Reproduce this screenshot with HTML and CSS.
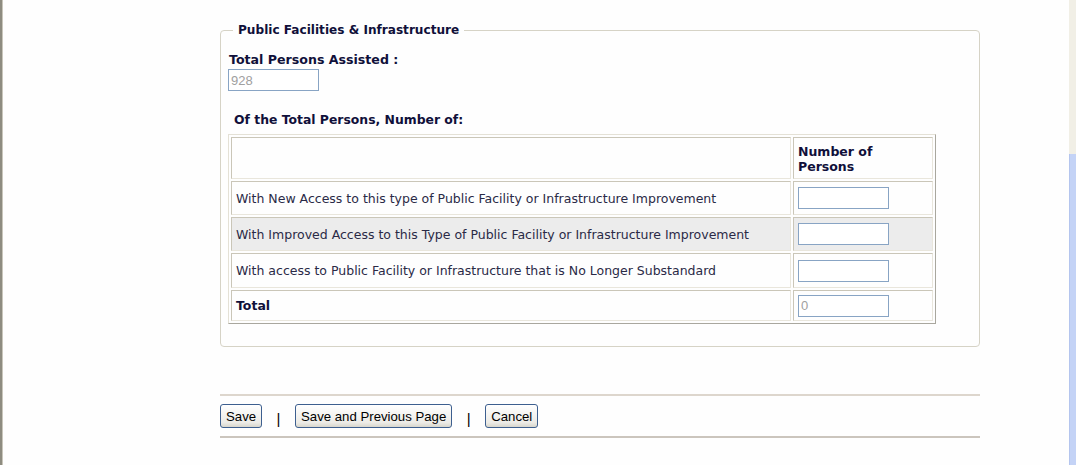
FILE: index.html
```html
<!DOCTYPE html>
<html>
<head>
<meta charset="utf-8">
<title>Public Facilities &amp; Infrastructure</title>
<link rel="stylesheet" href="styles.css">
</head>
<body>
<div class="frame">
  <div class="edge"></div>
  <main class="main">
    <div class="content">
      <fieldset class="group">
        <legend class="group-title">Public Facilities &amp; Infrastructure</legend>
        <div class="field">
          <label class="field-label">Total Persons Assisted :</label>
          <input class="text-input" type="text" value="928" disabled>
        </div>
        <h3 class="sub-heading">Of the Total Persons, Number of:</h3>
        <table class="grid">
          <tr class="head-row">
            <td class="desc"></td>
            <td class="num head">Number of Persons</td>
          </tr>
          <tr class="row-a">
            <td class="desc">With New Access to this type of Public Facility or Infrastructure Improvement</td>
            <td class="num"><input class="text-input" type="text"></td>
          </tr>
          <tr class="row-a alt">
            <td class="desc">With Improved Access to this Type of Public Facility or Infrastructure Improvement</td>
            <td class="num"><input class="text-input" type="text"></td>
          </tr>
          <tr class="row-b">
            <td class="desc">With access to Public Facility or Infrastructure that is No Longer Substandard</td>
            <td class="num"><input class="text-input" type="text"></td>
          </tr>
          <tr class="row-c">
            <td class="desc strong">Total</td>
            <td class="num"><input class="text-input" type="text" value="0" disabled></td>
          </tr>
        </table>
      </fieldset>
      <div class="actions">
        <button class="btn" type="button">Save</button>
        <span class="sep">|</span>
        <button class="btn" type="button">Save and Previous Page</button>
        <span class="sep">|</span>
        <button class="btn" type="button">Cancel</button>
      </div>
    </div>
  </main>
  <div class="scrollbar">
    <div class="track"></div>
    <div class="thumb"></div>
  </div>
</div>
</body>
</html>
```

FILE: styles.css
```css
html, body {
  margin: 0;
  padding: 0;
  background: #fefefe;
}
body {
  font-family: "DejaVu Sans", Verdana, sans-serif;
  font-size: 12.5px;
  color: #2a2a46;
}
.frame {
  display: flex;
  height: 465px;
  overflow: hidden;
}
.edge {
  width: 2px;
  flex: none;
  background: #8e8c80;
  border-right: 1px solid #c9c6bb;
}
.main {
  flex: 1;
}
.content {
  width: 760px;
  margin-left: 217px;
  padding-top: 22px;
}
.group {
  margin: 0;
  padding: 14px 8px 22px 8px;
  border: 1px solid #d6d3c6;
  border-radius: 4px;
}
.group-title {
  margin-left: 4px;
  padding: 0 5px;
  font-weight: bold;
  font-size: 12.1px;
  color: #10103a;
  line-height: 16px;
}
.field {
  display: flex;
  flex-direction: column;
  align-items: flex-start;
  gap: 1px;
}
.field-label {
  font-weight: bold;
  font-size: 12.6px;
  color: #10103a;
  line-height: 16px;
}
.text-input {
  box-sizing: border-box;
  display: block;
  width: 91px;
  height: 22px;
  margin: 0;
  border: 1px solid #88a4c4;
  background: #fff;
  padding: 1px 2px;
  font-family: "Liberation Sans", Arial, sans-serif;
  font-size: 13px;
  color: #a0a0a0;
}
.field .text-input {
  margin-left: -1px;
}
.sub-heading {
  margin: 21px 0 6px 5px;
  font-size: 12.4px;
  font-weight: bold;
  color: #10103a;
  line-height: 16px;
}
.grid {
  margin-left: -1px;
  border-collapse: separate;
  border-spacing: 2px;
  border: 1px solid;
  border-color: #e4e1d6 #a9a79e #a9a79e #e4e1d6;
}
.grid td {
  box-sizing: border-box;
  padding: 0 4px;
  border: 1px solid;
  border-color: #cac6b8 #e9e6dc #e9e6dc #cac6b8;
  vertical-align: middle;
}
.grid .desc {
  width: 560px;
}
.grid .num {
  width: 140px;
}
.head-row td {
  height: 42px;
  padding-top: 6px;
  vertical-align: top;
}
.head {
  font-weight: bold;
  color: #10103a;
  line-height: 15px;
  padding-right: 20px !important;
}
.row-a td {
  height: 34px;
}
.row-b td {
  height: 35px;
}
.row-c td {
  height: 31px;
}
.alt td {
  background: #ececec;
}
.strong {
  font-weight: bold;
  color: #10103a;
}
.actions {
  margin-top: 47px;
  padding: 8px 0 8px 0;
  border-top: 2px solid #ddd6cd;
  border-bottom: 2px solid #cbc5bd;
  display: flex;
  align-items: center;
}
.btn {
  height: 24px;
  padding: 0 5px;
  border: 1px solid #3d5f8f;
  border-radius: 3px;
  background: linear-gradient(#ffffff, #ecebe6 80%, #d8d6cc);
  font-family: "Liberation Sans", Arial, sans-serif;
  font-size: 13.2px;
  color: #000;
}
.sep {
  width: 33px;
  text-align: center;
  font-family: "Liberation Sans", Arial, sans-serif;
  font-size: 15px;
  color: #000;
  padding-top: 5px;
}
.scrollbar {
  width: 7px;
  flex: none;
  display: flex;
  flex-direction: column;
}
.track {
  height: 154px;
  background: #f1efe6;
}
.thumb {
  flex: 1;
  background: #c4d3f6;
  border-left: 1px solid #b4c5ee;
}
```
